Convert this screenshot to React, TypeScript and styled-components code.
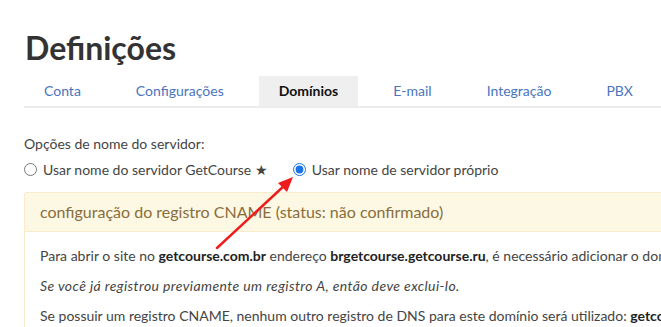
import React, { FC } from 'react';
import styled, { createGlobalStyle } from 'styled-components';

const GlobalStyle = createGlobalStyle`
  html, body {
    margin: 0;
    padding: 0;
    background: #fff;
    overflow: hidden;
  }
  body {
    font-family: Lato, "Open Sans", sans-serif;
    color: #333;
  }
`;

const Page = styled.div`
  position: relative;
  width: 661px;
  height: 327px;
  padding: 30px 0 0 24px;
  box-sizing: border-box;
  overflow: hidden;
`;

const Title = styled.h1`
  margin: 0;
  font-size: 32px;
  line-height: 36px;
  font-weight: 700;
  color: #333;
  padding-left: 1px;
`;

const Tabs = styled.ul`
  display: flex;
  gap: 15px;
  list-style: none;
  margin: 10px 0 0;
  padding: 0;
  border-bottom: 2px solid #ececec;
  width: 700px;
`;

const Tab = styled.li<{ $active?: boolean }>`
  padding: 0 20px;
  height: 30px;
  line-height: 30px;
  font-size: 14px;
  color: ${(p) => (p.$active ? '#111' : '#4a74bd')};
  font-weight: ${(p) => (p.$active ? 700 : 400)};
  background: ${(p) => (p.$active ? '#efefef' : 'transparent')};
`;

const Label = styled.div`
  margin-top: 27px;
  font-size: 14px;
  line-height: 18px;
  color: #444;
`;

const RadioRow = styled.div`
  display: flex;
  align-items: center;
  gap: 25px;
  margin-top: 8px;
  font-size: 14px;
  color: #444;
`;

const RadioLabel = styled.label`
  display: flex;
  align-items: center;
  gap: 6px;
`;

const Radio = styled.input`
  margin: 0;
  width: 13px;
  height: 13px;
  accent-color: #1a73e8;
`;

const Panel = styled.div`
  margin-top: 14px;
  width: 800px;
  border: 1px solid #faebcc;
  border-radius: 2px;
`;

const PanelHeading = styled.div`
  background: #fcf8e3;
  color: #8a6d3b;
  font-size: 16px;
  height: 38px;
  line-height: 38px;
  padding: 0 15px;
  border-bottom: 1px solid #faebcc;
`;

const PanelBody = styled.div`
  padding: 15px 15px 0;
  font-size: 14px;
  color: #444;
  white-space: nowrap;
`;

const Line = styled.p<{ $italic?: boolean }>`
  margin: 0 0 12px;
  line-height: 18px;
  font-style: ${(p) => (p.$italic ? 'italic' : 'normal')};
  letter-spacing: ${(p) => (p.$italic ? '0.4px' : '0')};

  b {
    color: #222;
  }
`;

const Arrow: FC = () => (
  <svg
    width="661"
    height="327"
    style={{ position: 'absolute', left: 0, top: 0, pointerEvents: 'none' }}
  >
    <line x1="217" y1="248" x2="285" y2="185" stroke="#ee1c1c" strokeWidth="2.5" strokeLinecap="round" />
    <polygon points="293,177 278,183 287,192" fill="#ee1c1c" />
  </svg>
);

const App: FC = function App() {
  return (
    <Page>
      <GlobalStyle />
      <Title>Definições</Title>
      <Tabs>
        <Tab>Conta</Tab>
        <Tab>Configurações</Tab>
        <Tab $active>Domínios</Tab>
        <Tab>E-mail</Tab>
        <Tab>Integração</Tab>
        <Tab>PBX</Tab>
      </Tabs>

      <Label>Opções de nome do servidor:</Label>
      <RadioRow>
        <RadioLabel>
          <Radio type="radio" name="server" readOnly />
          Usar nome do servidor GetCourse ★
        </RadioLabel>
        <RadioLabel>
          <Radio type="radio" name="server" defaultChecked />
          Usar nome de servidor próprio
        </RadioLabel>
      </RadioRow>

      <Panel>
        <PanelHeading>configuração do registro CNAME (status: não confirmado)</PanelHeading>
        <PanelBody>
          <Line>
            Para abrir o site no <b>getcourse.com.br</b> endereço <b>brgetcourse.getcourse.ru</b>, é necessário adicionar o domínio
          </Line>
          <Line $italic>Se você já registrou previamente um registro A, então deve exclui-lo.</Line>
          <Line>
            Se possuir um registro CNAME, nenhum outro registro de DNS para este domínio será utilizado: <b>getcourse</b>
          </Line>
        </PanelBody>
      </Panel>
      <Arrow />
    </Page>
  );
};

export default App;
